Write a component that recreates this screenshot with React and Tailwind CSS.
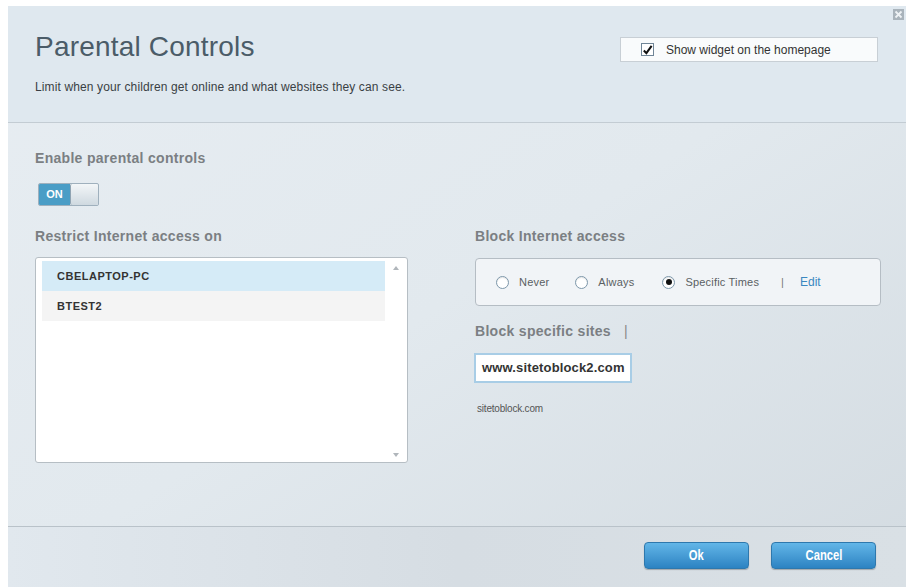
import React from "react";

const font = { fontFamily: '"Liberation Sans", Arial, sans-serif' };

function Radio({ label, checked }) {
    return (
        <label className="flex items-center">
            <span className="w-[13px] h-[13px] rounded-full border border-[#7d97aa] bg-white flex items-center justify-center shadow-[inset_0_1px_1px_rgba(0,0,0,0.1)]">
                {checked && <span className="w-[6px] h-[6px] rounded-full bg-[#111]" />}
            </span>
            <span className="ml-[10px] text-[11px] text-[#5a5f63] tracking-[0.2px]">{label}</span>
        </label>
    );
}

function Button({ children }) {
    return (
        <button className="w-[105px] h-[27px] rounded-[4px] border border-[#2e78ad] bg-gradient-to-b from-[#62b6e8] to-[#2c83c2] text-white text-[14px] font-bold shadow-[0_1px_1px_rgba(0,0,0,0.25)]">
            <span className="inline-block scale-x-[0.8]">{children}</span>
        </button>
    );
}

function Heading({ children, className = "" }) {
    return <h2 className={"text-[14px] leading-[16px] font-bold text-[#7b7f83] tracking-[0.3px] " + className}>{children}</h2>;
}

export default function App() {
    return (
        <div className="w-full h-[587px] bg-white pt-[6px] pl-[8px] pr-[3px] overflow-hidden" style={font}>
            <div className="relative h-full flex flex-col bg-gradient-to-br from-[#e7edf2] via-[#e2e9ee] to-[#d3dbe1]">
                {/* close */}
                <div className="absolute top-[3px] right-[2px] w-[11px] h-[11px] bg-[#a9b3bb] flex items-center justify-center">
                    <svg width="9" height="9" viewBox="0 0 9 9">
                        <path d="M1.5 1.5 L7.5 7.5 M7.5 1.5 L1.5 7.5" stroke="#eef2f5" strokeWidth="1.8" />
                    </svg>
                </div>

                {/* header */}
                <div className="h-[117px] shrink-0 bg-[#dfe8ef] border-b border-[#c3ccd3] flex justify-between pl-[27px] pr-[28px]">
                    <div className="pt-[25px]">
                        <h1 className="text-[28px] leading-[32px] font-light text-[#4b5c68] tracking-[0.2px]">Parental Controls</h1>
                        <p className="mt-[15px] text-[12px] text-[#3a3f44] tracking-[0.13px]">Limit when your children get online and what websites they can see.</p>
                    </div>
                    <div className="pt-[31px]">
                        <div className="w-[258px] h-[25px] border border-[#c8cfd5] bg-[#f9fbfc] flex items-center pl-[20px]">
                            <span className="w-[13px] h-[13px] border border-[#6f8597] bg-white flex items-center justify-center">
                                <svg width="12" height="12" viewBox="0 0 12 12">
                                    <path d="M2 6.5 L4.8 9.5 L10.5 1.5" fill="none" stroke="#111" strokeWidth="2.2" />
                                </svg>
                            </span>
                            <span className="ml-[12px] text-[12px] text-[#333]">Show widget on the homepage</span>
                        </div>
                    </div>
                </div>

                {/* body */}
                <div className="flex-1 pl-[27px] pt-[27px] border-b border-[#b9c2c9]">
                    <Heading>Enable parental controls</Heading>
                    <div className="mt-[17px] ml-[3px] flex w-[61px] h-[23px] rounded-[2px] overflow-hidden border border-[#9fb0bd]">
                        <div className="w-[31px] bg-[#4a9dc6] flex items-center justify-center text-white text-[11px] font-bold">ON</div>
                        <div className="flex-1 bg-gradient-to-b from-[#f3f6f8] to-[#cfd9e0] border-l border-[#8fa3b2] rounded-[2px]" />
                    </div>

                    <div className="mt-[22px] flex">
                        <div className="w-[373px]">
                            <Heading>Restrict Internet access on</Heading>
                            <div className="mt-[13px] h-[206px] bg-white border border-[#b6bec4] rounded-[3px] flex pt-[3px] pl-[6px]">
                                <div className="w-[343px]">
                                    <div className="h-[30px] bg-[#d5ebf7] flex items-center pl-[15px] text-[11px] font-bold text-[#333] tracking-[0.5px]">CBELAPTOP-PC</div>
                                    <div className="h-[30px] bg-[#f4f4f4] flex items-center pl-[15px] text-[11px] font-bold text-[#333] tracking-[0.5px]">BTEST2</div>
                                </div>
                                <div className="flex-1 flex flex-col items-center justify-between py-[5px]">
                                    <svg width="6" height="4" viewBox="0 0 6 4"><path d="M0 4 L3 0 L6 4 Z" fill="#b0b6bb" /></svg>
                                    <svg width="6" height="4" viewBox="0 0 6 4"><path d="M0 0 L3 4 L6 0 Z" fill="#b0b6bb" /></svg>
                                </div>
                            </div>
                        </div>

                        <div className="ml-[67px] w-[406px]">
                            <Heading>Block Internet access</Heading>
                            <div className="mt-[14px] h-[48px] rounded-[4px] border border-[#b5bdc4] bg-[#f1f4f7] flex items-center pl-[20px]">
                                <Radio label="Never" />
                                <span className="ml-[26px]"><Radio label="Always" /></span>
                                <span className="ml-[28px]"><Radio label="Specific Times" checked /></span>
                                <span className="ml-[22px] text-[11px] text-[#777]">|</span>
                                <span className="ml-[16px] text-[12px] text-[#3a87c0]">Edit</span>
                            </div>
                            <Heading className="mt-[17px]">
                                Block specific sites<span className="ml-[13px] font-normal text-[#888]">|</span>
                            </Heading>
                            <div className="mt-[14px] -ml-[1px] w-[158px] h-[30px] border-2 border-[#a8cde6] bg-white flex items-center pl-[6px] text-[13px] font-bold text-[#333] tracking-[0.15px]">
                                www.sitetoblock2.com
                            </div>
                            <p className="mt-[18px] ml-[2px] text-[10px] text-[#555] tracking-[-0.2px]">sitetoblock.com</p>
                        </div>
                    </div>
                </div>

                {/* footer */}
                <div className="h-[60px] shrink-0 flex justify-end items-start pt-[15px] pr-[30px] gap-[22px] bg-gradient-to-r from-[#e1e8ee] via-[#d6dde3] to-[#d9e0e5]">
                    <Button>Ok</Button>
                    <Button>Cancel</Button>
                </div>
            </div>
        </div>
    );
}
